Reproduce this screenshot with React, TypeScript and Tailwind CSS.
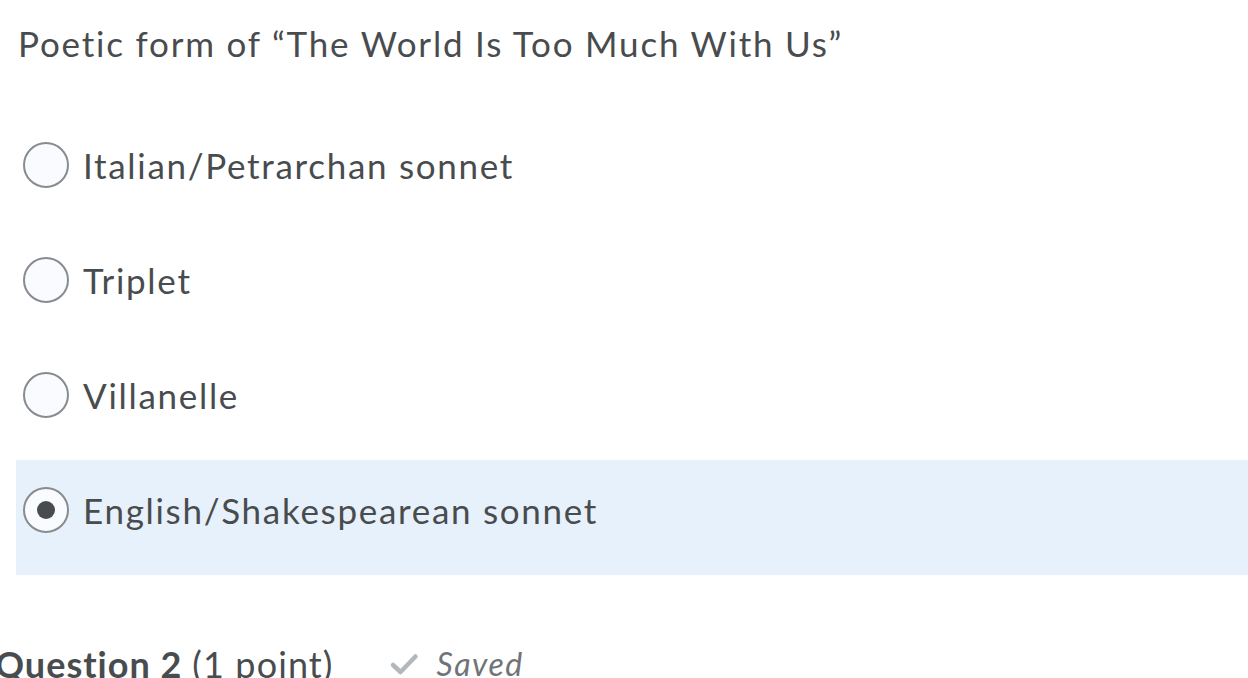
import React from "react";

const options = [
  { label: "Italian/Petrarchan sonnet", selected: false },
  { label: "Triplet", selected: false },
  { label: "Villanelle", selected: false },
  { label: "English/Shakespearean sonnet", selected: true },
];

function Radio({ checked }: { checked: boolean }) {
  return (
    <span className="w-[46px] h-[46px] rounded-full border-2 border-[#868c8f] bg-[#f9fbff] flex items-center justify-center flex-shrink-0">
      {checked && <span className="w-[18px] h-[18px] rounded-full bg-[#494c4e]" />}
    </span>
  );
}

export default function App() {
  return (
    <div className="w-[1248px] h-[678px] overflow-hidden bg-white font-['Lato',sans-serif] text-[#494c4e] tracking-[1.7px]">
      {/* Question text */}
      <div className="h-[115px] pt-[21px] pl-[18px] text-[35px] leading-[44px] tracking-[1.8px]">
        Poetic form of “The World Is Too Much With Us”
      </div>

      {/* Choices */}
      <div>
        {options.map((opt) => (
          <div
            key={opt.label}
            className={`h-[115px] ml-[16px] pl-[7px] pt-[27px] flex items-start gap-[14px] ${
              opt.selected ? "bg-[#e7f1fb]" : ""
            }`}
          >
            <Radio checked={opt.selected} />
            <span className="text-[35px] leading-[46px]">{opt.label}</span>
          </div>
        ))}
      </div>

      {/* Next question header */}
      <div className="mt-[67px] -ml-[5px] flex items-center text-[36px] leading-[44px]">
        <span className="font-bold tracking-[1px]">Question 2</span>
        <span className="ml-[10px] tracking-[1.1px]">(1 point)</span>
        <span className="ml-[55px] flex items-center gap-[18px] text-[#6e7477]">
          <svg width="30" height="24" viewBox="0 0 30 24" fill="none">
            <path
              d="M4 13 L11.5 20 L26.5 4.5"
              stroke="#b3b8bc"
              strokeWidth="4.5"
              strokeLinecap="round"
              strokeLinejoin="round"
            />
          </svg>
          <span className="italic text-[32px] tracking-[1.5px]">Saved</span>
        </span>
      </div>
    </div>
  );
}
